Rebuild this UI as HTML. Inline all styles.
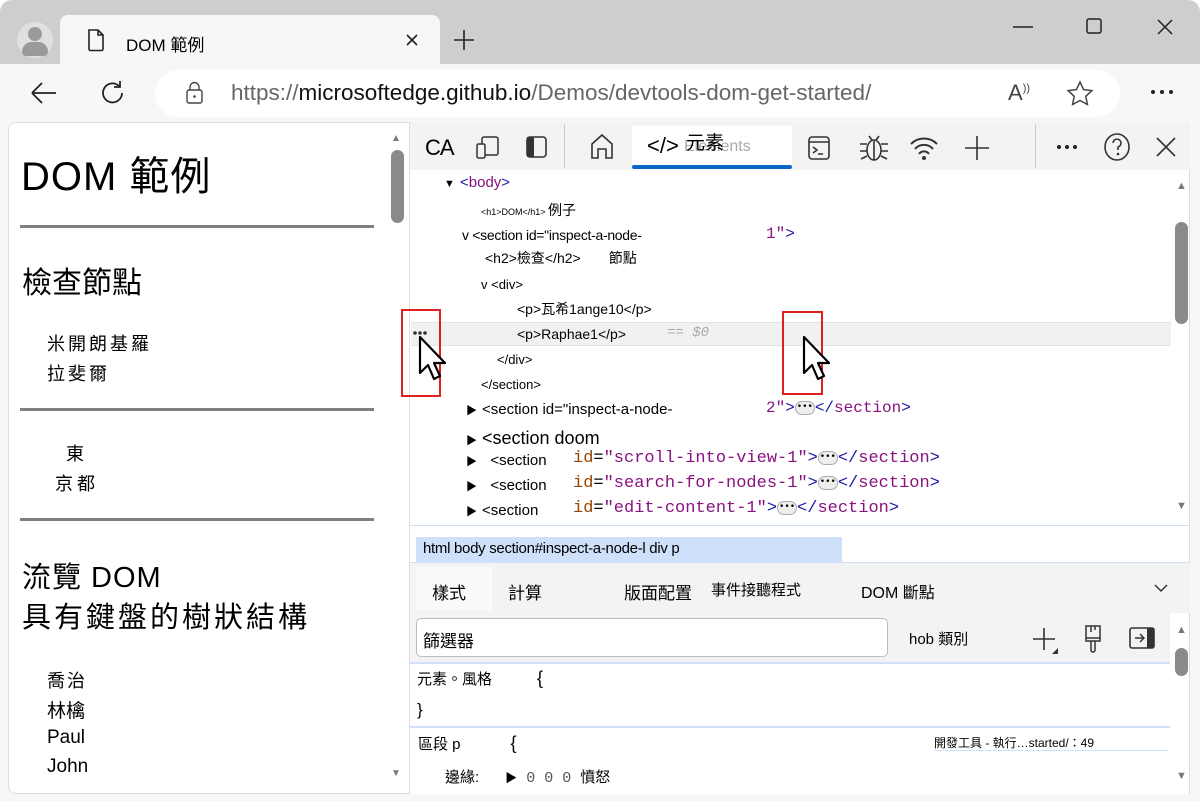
<!DOCTYPE html>
<html><head><meta charset="utf-8"><style>
*{margin:0;padding:0;box-sizing:border-box}
body{width:1200px;height:801px;background:#fff;position:relative;overflow:hidden;font-family:"Liberation Sans","Noto Sans CJK TC",sans-serif;color:#000}
.a{position:absolute}
.win{left:0;top:0;width:1200px;height:801px;background:#f7f7f7;border-radius:12px 12px 0 0;overflow:hidden}
.top{left:0;top:0;width:1200px;height:64px;background:#cecece}
.mono{font-family:"Liberation Mono","Noto Sans CJK TC",monospace}
.t{font-size:15px;white-space:nowrap}
.tag{color:#881280}.attr{color:#994500}.val{color:#1a1aa6}
.pur{color:#881280}
.tri{font-size:11px;display:inline-block;width:16px}
.ell{display:inline-block;width:20px;height:14px;border:1px solid #aaa;border-radius:7px;background:#eee;font-size:9px;line-height:11px;text-align:center;vertical-align:middle;font-weight:bold}
svg{position:absolute}
</style></head><body>
<div class="a win">
<div class="a top"></div>
<div class="a" style="left:17px;top:22px;width:36px;height:36px;border-radius:50%;background:#e0e0e0"></div>
<div class="a" style="left:28px;top:27px;width:14px;height:14px;border-radius:50%;background:#9a9a9a"></div>
<div class="a" style="left:22px;top:42px;width:26px;height:14px;border-radius:13px 13px 6px 6px;background:#9a9a9a"></div>
<div class="a" style="left:60px;top:15px;width:380px;height:50px;background:#f7f7f7;border-radius:8px 8px 0 0"></div>
<svg style="left:86px;top:28px" width="20" height="24" viewBox="0 0 20 24"><path d="M3 2h9l5 5v14a1.5 1.5 0 0 1-1.5 1.5h-11A1.5 1.5 0 0 1 3 21z M12 2v5h5" fill="none" stroke="#222" stroke-width="1.6"/></svg>
<div class="a t" style="left:126px;top:31px;font-size:17px">DOM 範例</div>
<svg style="left:404px;top:32px" width="16" height="16"><path d="M3 3l10 10M13 3L3 13" stroke="#222" stroke-width="1.6"/></svg>
<svg style="left:452px;top:28px" width="24" height="24"><path d="M12 2v20M2 12h20" stroke="#222" stroke-width="1.6"/></svg>
<svg style="left:1000px;top:10px" width="190" height="34"><path d="M13 17h20" stroke="#222" stroke-width="1.5"/><rect x="87" y="9" width="14" height="14" rx="2" fill="none" stroke="#222" stroke-width="1.5"/><path d="M158 10l14 14M172 10l-14 14" stroke="#222" stroke-width="1.5"/></svg>
<svg style="left:28px;top:80px" width="30" height="26"><path d="M4 13h24M4 13l10-10M4 13l10 10" fill="none" stroke="#222" stroke-width="1.8"/></svg>
<svg style="left:98px;top:78px" width="30" height="30"><path d="M24 15a9.5 9.5 0 1 1-3-7 M22 3v6h-6" fill="none" stroke="#222" stroke-width="1.8"/></svg>
<div class="a" style="left:155px;top:70px;width:965px;height:47px;background:#fff;border-radius:24px"></div>
<svg style="left:184px;top:80px" width="22" height="26"><rect x="3" y="10" width="15" height="13" rx="2" fill="none" stroke="#444" stroke-width="1.4"/><path d="M6 10V7a4.5 4.5 0 0 1 9 0v3" fill="none" stroke="#444" stroke-width="1.4"/><circle cx="10.5" cy="16.5" r="1.3" fill="#444"/></svg>
<div class="a t" style="left:231px;top:80px;font-size:22.5px;color:#666">https://<span style="color:#111">microsoftedge.github.io</span>/Demos/devtools-dom-get-started/</div>
<div class="a t" style="left:1008px;top:80px;font-size:22px;color:#444">A<sup style="font-size:11px">))</sup></div>
<svg style="left:1066px;top:80px" width="28" height="28"><path d="M14 2l3.6 7.6 8.2 1-6 5.7 1.6 8.2L14 20.5 6.6 24.5 8.2 16.3 2.2 10.6l8.2-1z" fill="none" stroke="#444" stroke-width="1.5"/></svg>
<svg style="left:1150px;top:88px" width="24" height="8"><circle cx="3" cy="4" r="2" fill="#222"/><circle cx="12" cy="4" r="2" fill="#222"/><circle cx="21" cy="4" r="2" fill="#222"/></svg>

<div class="a" style="left:8px;top:122px;width:402px;height:672px;background:#fff;border:1px solid #ddd;border-radius:8px 0 0 8px"></div>
<div class="a" style="left:391px;top:150px;width:13px;height:73px;background:#8a8a8a;border-radius:7px"></div>
<div class="a" style="left:391px;top:133px;font-size:10px;color:#777">▲</div>
<div class="a" style="left:391px;top:768px;font-size:10px;color:#777">▼</div>
<div class="a t" style="left:21px;top:144px;font-size:40px;letter-spacing:1px">DOM 範例</div>
<div class="a" style="left:20px;top:225px;width:354px;height:3px;background:#808080"></div>
<div class="a t" style="left:22px;top:258px;font-size:30px">檢查節點</div>
<div class="a t" style="left:47px;top:330px;font-size:18px;letter-spacing:3px">米開朗基羅</div>
<div class="a t" style="left:47px;top:360px;font-size:18px;letter-spacing:3px">拉斐爾</div>
<div class="a" style="left:20px;top:408px;width:354px;height:3px;background:#808080"></div>
<div class="a t" style="left:66px;top:440px;font-size:18px">東</div>
<div class="a t" style="left:55px;top:470px;font-size:18px;letter-spacing:4px">京都</div>
<div class="a" style="left:20px;top:518px;width:354px;height:3px;background:#808080"></div>
<div class="a t" style="left:22px;top:554px;font-size:29px;letter-spacing:1px">流覽 DOM</div>
<div class="a t" style="left:22px;top:594px;font-size:29px;letter-spacing:3px">具有鍵盤的樹狀結構</div>
<div class="a t" style="left:47px;top:667px;font-size:18px;letter-spacing:2px">喬治</div>
<div class="a t" style="left:47px;top:696px;font-size:19px">林檎</div>
<div class="a t" style="left:47px;top:727px;font-size:19px">Paul</div>
<div class="a t" style="left:47px;top:756px;font-size:19px">John</div>

<div class="a" style="left:410px;top:122px;width:780px;height:672px;background:#fff;border-right:1px solid #ddd"></div>
<div class="a" style="left:410px;top:122px;width:780px;height:48px;background:#f3f3f3"></div>
<div class="a t" style="left:425px;top:135px;font-size:22px;letter-spacing:-1px">CA</div>
<svg style="left:474px;top:134px" width="28" height="28"><rect x="8" y="3" width="16" height="18" rx="2" fill="none" stroke="#333" stroke-width="1.5"/><rect x="3" y="10" width="8" height="14" rx="1.5" fill="#f3f3f3" stroke="#333" stroke-width="1.5"/></svg>
<svg style="left:524px;top:134px" width="26" height="28"><rect x="3" y="3" width="19" height="20" rx="3" fill="none" stroke="#333" stroke-width="1.6"/><rect x="3" y="3" width="7" height="20" fill="#333"/></svg>
<div class="a" style="left:564px;top:124px;width:1px;height:44px;background:#ccc"></div>
<svg style="left:588px;top:132px" width="28" height="30"><path d="M4 26V12L14 3l10 9v14h-6v-9h-8v9z" fill="none" stroke="#333" stroke-width="1.6"/></svg>
<div class="a" style="left:632px;top:126px;width:160px;height:44px;background:#fff"></div>
<div class="a" style="left:632px;top:165px;width:160px;height:4px;background:#0a66c8;border-radius:2px"></div>
<div class="a t" style="left:647px;top:133px;font-size:22px">&lt;/&gt;</div>
<div class="a t" style="left:684px;top:138px;font-size:16px;color:#aaa">Elements</div>
<div class="a t" style="left:686px;top:128px;font-size:19px">元素</div>
<svg style="left:806px;top:134px" width="28" height="28"><rect x="3" y="3" width="20" height="22" rx="3" fill="none" stroke="#333" stroke-width="1.6"/><path d="M3 8h20M7 13l4 3-4 3M12 20h5" fill="none" stroke="#333" stroke-width="1.5"/></svg>
<svg style="left:858px;top:132px" width="32" height="32"><ellipse cx="16" cy="18" rx="7" ry="10" fill="none" stroke="#333" stroke-width="1.6"/><path d="M16 9v19M2 12h7M23 12h7M2 19h7M23 19h7M3 27l6-3M29 27l-6-3M11 4l3 4M21 4l-3 4" stroke="#333" stroke-width="1.6"/></svg>
<svg style="left:908px;top:134px" width="32" height="28"><path d="M3 10a18 18 0 0 1 26 0M7 15a12 12 0 0 1 18 0M11 20a6 6 0 0 1 10 0" fill="none" stroke="#333" stroke-width="2"/><circle cx="16" cy="24" r="2" fill="#333"/></svg>
<svg style="left:964px;top:134px" width="28" height="28"><path d="M13 2v24M1 14h24" stroke="#333" stroke-width="1.6"/></svg>
<div class="a" style="left:1035px;top:124px;width:1px;height:44px;background:#ccc"></div>
<svg style="left:1056px;top:143px" width="24" height="8"><circle cx="3" cy="4" r="2" fill="#222"/><circle cx="11" cy="4" r="2" fill="#222"/><circle cx="19" cy="4" r="2" fill="#222"/></svg>
<svg style="left:1102px;top:131px" width="30" height="32"><ellipse cx="15" cy="16" rx="12" ry="13" fill="none" stroke="#333" stroke-width="1.6"/><path d="M11 12a4 4 0 1 1 5 4v3" fill="none" stroke="#333" stroke-width="1.6"/><circle cx="16" cy="23" r="1.3" fill="#333"/></svg>
<svg style="left:1154px;top:135px" width="24" height="24"><path d="M3 3l18 18M21 3L3 21" stroke="#333" stroke-width="1.6"/></svg>

<div class="a" style="left:411px;top:322px;width:760px;height:24px;background:#f1f1f1;border-top:1px solid #e4e4e4;border-bottom:1px solid #e4e4e4"></div>
<div class="a t" style="left:444px;top:174px;font-size:15px"><span class="tri">▼</span><span class="val">&lt;</span><span class="tag">body</span><span class="val">&gt;</span></div>
<div class="a t" style="left:481px;top:200px;font-size:9px">&lt;h1&gt;DOM&lt;/h1&gt; <span style="font-size:14px">例子</span></div>
<div class="a t" style="left:462px;top:227px;font-size:14px;letter-spacing:-0.3px">v &lt;section id="inspect-a-node-</div>
<div class="a t mono" style="left:766px;top:225px;font-size:16px"><span class="pur">1"</span><span class="val">&gt;</span></div>
<div class="a t" style="left:485px;top:248px;font-size:14px">&lt;h2&gt;檢查&lt;/h2&gt;<span style="margin-left:28px">節點</span></div>
<div class="a t" style="left:481px;top:277px;font-size:13px">v &lt;div&gt;</div>
<div class="a t" style="left:517px;top:299px;font-size:14px">&lt;p&gt;瓦希1ange10&lt;/p&gt;</div>
<div class="a t" style="left:517px;top:326px;font-size:14px">&lt;p&gt;Raphae1&lt;/p&gt;</div>
<div class="a t mono" style="left:667px;top:325px;font-size:14px;color:#aaa;font-style:italic">== $0</div>
<svg style="left:413px;top:330px" width="14" height="6"><circle cx="2" cy="3" r="1.8" fill="#333"/><circle cx="7" cy="3" r="1.8" fill="#333"/><circle cx="12" cy="3" r="1.8" fill="#333"/></svg>
<div class="a t" style="left:497px;top:352px;font-size:13px">&lt;/div&gt;</div>
<div class="a t" style="left:481px;top:377px;font-size:13px">&lt;/section&gt;</div>
<div class="a t" style="left:466px;top:401px;font-size:15px"><span class="tri">▶</span>&lt;section id="inspect-a-node-</div>
<div class="a t mono" style="left:766px;top:399px;font-size:16px"><span class="pur">2"</span><span class="val">&gt;</span><span class="ell">•••</span><span class="val">&lt;/</span><span class="tag">section</span><span class="val">&gt;</span></div>
<div class="a t" style="left:466px;top:428px;font-size:18px"><span class="tri">▶</span>&lt;section doom</div>
<div class="a t" style="left:466px;top:452px;font-size:15px"><span class="tri">▶</span>&nbsp;&nbsp;&lt;section</div>
<div class="a t mono" style="left:573px;top:449px;font-size:17px"><span class="attr">id</span>=<span class="pur">"scroll-into-view-1"</span><span class="val">&gt;</span><span class="ell">•••</span><span class="val">&lt;/</span><span class="tag">section</span><span class="val">&gt;</span></div>
<div class="a t" style="left:466px;top:477px;font-size:15px"><span class="tri">▶</span>&nbsp;&nbsp;&lt;section</div>
<div class="a t mono" style="left:573px;top:474px;font-size:17px"><span class="attr">id</span>=<span class="pur">"search-for-nodes-1"</span><span class="val">&gt;</span><span class="ell">•••</span><span class="val">&lt;/</span><span class="tag">section</span><span class="val">&gt;</span></div>
<div class="a t" style="left:466px;top:502px;font-size:15px"><span class="tri">▶</span>&lt;section</div>
<div class="a t mono" style="left:573px;top:499px;font-size:17px"><span class="attr">id</span>=<span class="pur">"edit-content-1"</span><span class="val">&gt;</span><span class="ell">•••</span><span class="val">&lt;/</span><span class="tag">section</span><span class="val">&gt;</span></div>
<div class="a" style="left:1175px;top:222px;width:13px;height:102px;background:#8a8a8a;border-radius:7px"></div>
<div class="a" style="left:1176px;top:180px;font-size:11px;color:#777">▲</div>
<div class="a" style="left:1176px;top:500px;font-size:11px;color:#777">▼</div>
<div class="a" style="left:410px;top:525px;width:780px;height:1px;background:#cfe0f7"></div>
<div class="a" style="left:416px;top:537px;width:426px;height:25px;background:#cfe0fb"></div>
<div class="a t" style="left:423px;top:540px;font-size:15px;letter-spacing:-0.3px">html body section#inspect-a-node-l div p</div>
<div class="a" style="left:410px;top:562px;width:780px;height:1px;background:#cfe0f7"></div>
<div class="a" style="left:410px;top:563px;width:780px;height:50px;background:#f3f3f3"></div>
<div class="a" style="left:416px;top:567px;width:76px;height:43px;background:#fafafa"></div>
<div class="a t" style="left:432px;top:579px;font-size:17px">樣式</div>
<div class="a t" style="left:508px;top:579px;font-size:17px">計算</div>
<div class="a t" style="left:624px;top:579px;font-size:17px">版面配置</div>
<div class="a t" style="left:711px;top:579px;font-size:15px">事件接聽程式</div>
<div class="a t" style="left:861px;top:579px;font-size:16px">DOM 斷點</div>
<svg style="left:1153px;top:582px" width="16" height="12"><path d="M2 3l6 6 6-6" fill="none" stroke="#333" stroke-width="1.5"/></svg>
<div class="a" style="left:410px;top:613px;width:760px;height:50px;background:#f3f3f3"></div>
<div class="a" style="left:416px;top:618px;width:472px;height:39px;background:#fff;border:1px solid #bbb;border-radius:5px"></div>
<div class="a t" style="left:423px;top:627px;font-size:17px">篩選器</div>
<div class="a t" style="left:909px;top:628px;font-size:15px">hob 類別</div>
<svg style="left:1032px;top:626px" width="28" height="30"><path d="M12 2v22M1 13h22" stroke="#333" stroke-width="1.6"/><path d="M26 22v6h-6z" fill="#333"/></svg>
<svg style="left:1082px;top:624px" width="22" height="30"><path d="M4 2h14v12H4z M4 14h14v3H4z M9 17h4v9a2 2 0 0 1-4 0z M9 2v6M13 2v4" fill="none" stroke="#333" stroke-width="1.5"/></svg>
<svg style="left:1128px;top:626px" width="30" height="26"><rect x="2" y="2" width="24" height="20" rx="2" fill="none" stroke="#333" stroke-width="1.6"/><rect x="19" y="2" width="7" height="20" fill="#333"/><path d="M7 12h9M12 8l4 4-4 4" fill="none" stroke="#333" stroke-width="1.5"/></svg>
<div class="a" style="left:410px;top:662px;width:760px;height:2px;background:#cfe0f7"></div>
<div class="a t" style="left:417px;top:668px;font-size:15px">元素。風格<span style="margin-left:45px;font-size:18px">{</span></div>
<div class="a t" style="left:417px;top:700px;font-size:17px">}</div>
<div class="a" style="left:410px;top:726px;width:760px;height:2px;background:#cfe0f7"></div>
<div class="a t" style="left:418px;top:733px;font-size:15px">區段 p<span style="margin-left:50px;font-size:18px">{</span></div>
<div class="a t" style="left:934px;top:734px;font-size:12px">開發工具 - 執行…started/：49</div>
<div class="a" style="left:934px;top:750px;width:234px;height:1px;background:#cfe0f7"></div>
<div class="a t" style="left:445px;top:766px;font-size:15px">邊緣:<span style="margin-left:26px;font-size:12px">▶</span><span class="mono" style="color:#555"> 0 0 0 </span>憤怒</div>
<div class="a" style="left:1175px;top:648px;width:13px;height:28px;background:#8a8a8a;border-radius:7px"></div>
<div class="a" style="left:1176px;top:624px;font-size:11px;color:#777">▲</div>
<div class="a" style="left:1176px;top:770px;font-size:11px;color:#777">▼</div>
<div class="a" style="left:401px;top:309px;width:40px;height:88px;border:2px solid #e02020"></div>
<div class="a" style="left:782px;top:311px;width:41px;height:84px;border:2px solid #e02020"></div>
<svg style="left:418px;top:335px" width="34" height="48"><path d="M2 2v36l8-8 6 14 6-3-6-13h11z" fill="#fff" stroke="#000" stroke-width="2.2" stroke-linejoin="round"/></svg>
<svg style="left:802px;top:335px" width="34" height="48"><path d="M2 2v36l8-8 6 14 6-3-6-13h11z" fill="#fff" stroke="#000" stroke-width="2.2" stroke-linejoin="round"/></svg>
</div>
</body></html>
